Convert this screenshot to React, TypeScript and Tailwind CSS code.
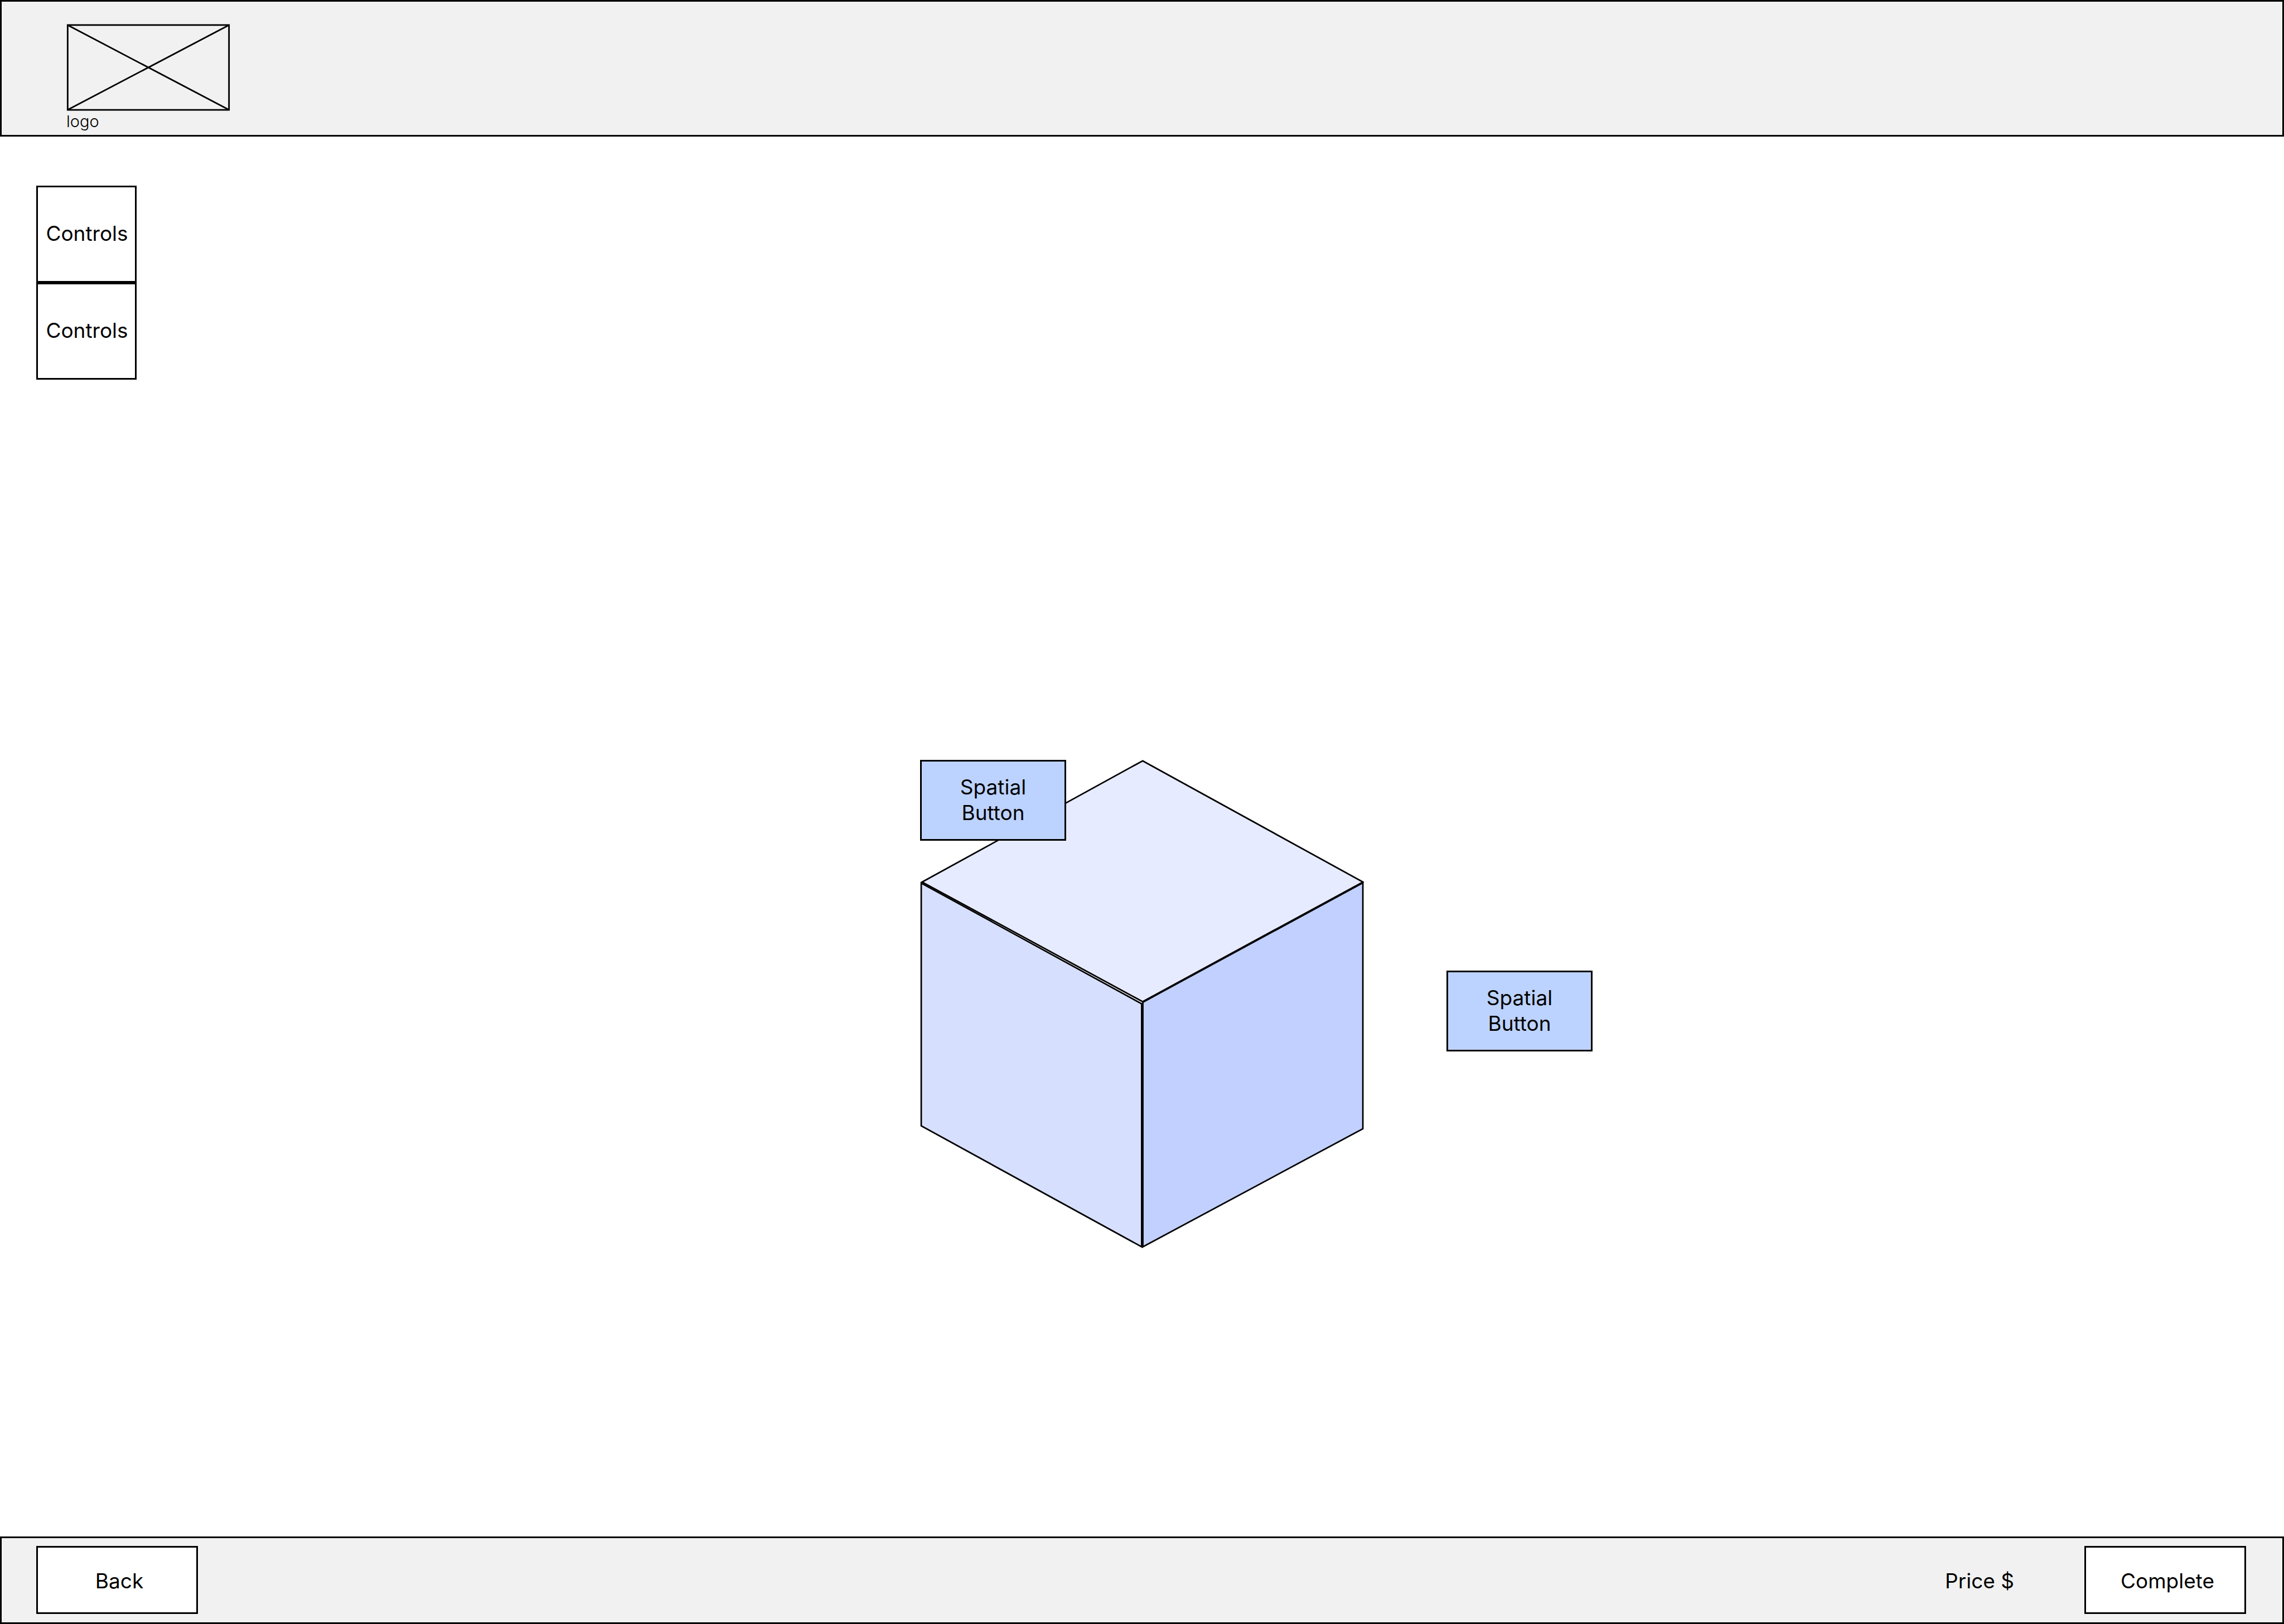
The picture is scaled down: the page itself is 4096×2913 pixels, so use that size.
import React from "react";

function LogoPlaceholder() {
  return (
    <svg viewBox="0 0 310 165" className="block h-[156px] w-[294px]" fill="none" stroke="#000" strokeWidth="3" aria-hidden="true">
      <rect x="2" y="2" width="306" height="161" />
      <path d="M2 2 L308 163 M308 2 L2 163" />
    </svg>
  );
}

function Cube() {
  return (
    <svg viewBox="1739 1437 840 924" className="block h-[876px] w-[796px]" stroke="#000" strokeWidth="2.9" role="img" aria-label="Cube">
      <path d="M1741.2 1670 L2158.4 1898.5 V2358.6 L1741.2 2129.5 Z" fill="#d7dfff" />
      <path d="M2577 1669.5 V2135 L2160.6 2358.6 V1895.5 Z" fill="#c2d0ff" />
      <path d="M2160.2 1438.6 L2577 1668 L2160.2 1894.5 L1743 1668 Z" fill="#e7ebff" />
    </svg>
  );
}

function ControlButton() {
  return (
    <button type="button" className="flex h-[174px] w-[180px] items-center justify-center border-3 border-black bg-white pb-0.5 pl-0.5">
      Controls
    </button>
  );
}

function SpatialButton({ className }: { className: string }) {
  return (
    <button type="button" className={`absolute flex h-[145px] w-[262px] items-center justify-center border-3 border-black bg-[#bdd3ff] px-12 pb-0.5 text-center ${className}`}>
      Spatial
      <br />
      Button
    </button>
  );
}

function FooterButton({ children }: { children: React.ReactNode }) {
  return (
    <button type="button" className="flex h-[122px] w-[290px] items-center justify-center border-3 border-black bg-white pt-1 pl-2">
      {children}
    </button>
  );
}

export default function App() {
  return (
    <div className="flex min-h-screen flex-col bg-white font-['Inter',sans-serif] text-[37px] leading-[46px] text-black">
      <header className="h-[245px] border-3 border-black bg-[#f1f1f1] pt-10 pl-[116px]">
        <LogoPlaceholder />
        <p className="pt-0.5 text-[29px] leading-[34px] font-light">logo</p>
      </header>

      <main className="flex-1 pt-[88px]">
        <div className="flex flex-col pl-[65px]">
          <ControlButton />
          <ControlButton />
        </div>
        <div className="mt-[682px] flex justify-center">
          <div className="relative">
            <Cube />
            <SpatialButton className="top-0 left-0" />
            <SpatialButton className="top-[378px] left-[944px]" />
          </div>
        </div>
      </main>

      <footer className="flex h-[157px] items-start border-3 border-black bg-[#f1f1f1] pt-3.5 pr-[65px] pl-[62px]">
        <FooterButton>Back</FooterButton>
        <p className="mt-10 mr-[126px] ml-auto">Price $</p>
        <FooterButton>Complete</FooterButton>
      </footer>
    </div>
  );
}
